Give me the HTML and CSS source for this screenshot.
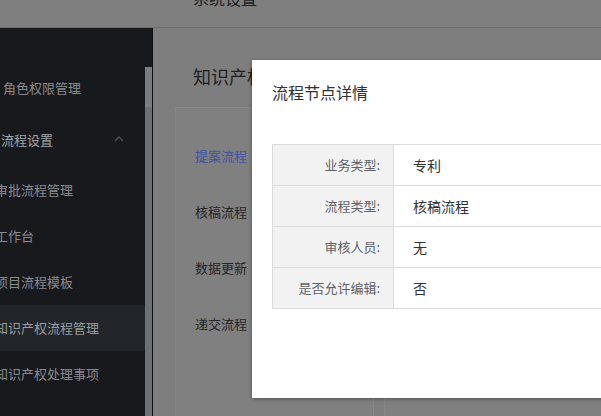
FILE: index.html
```html
<!DOCTYPE html>
<html lang="zh-CN">
<head>
<meta charset="utf-8">
<title>流程节点详情</title>
<link rel="stylesheet" href="styles.css">
</head>
<body>
<div class="app">
  <header class="topbar"><span class="crumb">系统设置</span></header>
  <div class="main">
    <aside class="sidebar">
      <nav class="menu">
        <div class="item lvl-a">角色权限管理</div>
        <div class="group"><span>流程设置</span>
          <svg class="chev" width="10" height="7" viewBox="0 0 10 7"><polyline points="1,6 5,2 9,6" fill="none" stroke="#505156" stroke-width="1.3"/></svg>
        </div>
        <div class="item sub">审批流程管理</div>
        <div class="item sub">工作台</div>
        <div class="item sub">项目流程模板</div>
        <div class="item sub active">知识产权流程管理</div>
        <div class="item sub">知识产权处理事项</div>
      </nav>
      <div class="scrollbar"><div class="track"></div><div class="thumb"></div></div>
    </aside>
    <section class="content">
      <h1 class="page-title">知识产权流程管理</h1>
      <div class="cards">
        <div class="card steps">
          <div class="step current">提案流程</div>
          <div class="step">核稿流程</div>
          <div class="step">数据更新</div>
          <div class="step">递交流程</div>
        </div>
        <div class="card detail"></div>
      </div>
    </section>
  </div>

  <div class="dialog">
    <div class="dialog-header"><span class="dialog-title">流程节点详情</span></div>
    <div class="dialog-body">
      <table class="info">
        <colgroup><col class="col-lbl"><col></colgroup>
        <tr><td class="lbl">业务类型:</td><td class="val">专利</td></tr>
        <tr><td class="lbl">流程类型:</td><td class="val">核稿流程</td></tr>
        <tr><td class="lbl">审核人员:</td><td class="val">无</td></tr>
        <tr><td class="lbl">是否允许编辑:</td><td class="val">否</td></tr>
      </table>
    </div>
  </div>
</div>
</body>
</html>
```
FILE: styles.css
```css
* { box-sizing: border-box; }
html, body { margin: 0; padding: 0; }
body {
  width: 601px;
  height: 416px;
  overflow: hidden;
  font-family: "Noto Sans CJK SC", "Microsoft YaHei", sans-serif;
  background: #7f7f7f;
}
.app { position: relative; width: 601px; height: 416px; overflow: hidden; }

.topbar {
  height: 28px;
  background: #7f7f7f;
  border-bottom: 1px solid #6f6f6f;
  padding-left: 193px;
  overflow: hidden;
}
.crumb {
  display: block;
  margin-top: -10px;
  font-size: 16px;
  line-height: 16px;
  color: #1c1c1e;
}

.main { display: flex; height: 388px; }

.sidebar {
  width: 153px;
  flex: none;
  display: flex;
  background: #18191d;
  border-right: 1px solid #0e0e10;
  overflow: hidden;
}
.menu {
  width: 165px;
  flex: none;
  margin-left: -20px;
  padding-top: 37px;
  font-size: 13px;
  color: #8a8b8e;
}
.item { height: 46px; line-height: 46px; white-space: nowrap; }
.lvl-a { padding-left: 23px; }
.sub { padding-left: 15px; }
.sub.active { background: #22262a; color: #9a9b9e; }
.group {
  height: 56px;
  display: flex;
  align-items: center;
  justify-content: space-between;
  padding-left: 21px;
  padding-right: 21px;
  color: #a4a5a8;
}
.chev { display: block; margin-top: -2px; }

.scrollbar { width: 7px; flex: none; padding-top: 39px; display: flex; flex-direction: column; }
.track { height: 40px; background: #7b7d80; }
.thumb { flex: 1; background: #6b7175; }

.content {
  flex: 1;
  background: #7e7e7e;
  padding: 36px 0 0 22px;
  overflow: hidden;
}
.page-title {
  margin: 0 0 19px 18px;
  font-size: 18px;
  line-height: 24px;
  font-weight: normal;
  color: #1e1e1f;
  white-space: nowrap;
}
.cards { display: flex; gap: 10px; height: 340px; }
.card {
  background: #808080;
  border: 1px solid #888888;
  border-bottom: none;
}
.steps { width: 199px; flex: none; padding: 20px 19px; }
.detail { width: 300px; flex: none; }
.step { height: 56px; line-height: 56px; font-size: 13px; color: #252526; }
.step.current { color: #3d55a0; }

.dialog {
  position: absolute;
  left: 252px;
  top: 60px;
  width: 480px;
  height: 338px;
  background: #ffffff;
  box-shadow: 0 1px 4px rgba(0, 0, 0, 0.35);
}
.dialog-header { padding: 20px 20px 10px; }
.dialog-title { display: block; font-size: 16px; line-height: 24px; color: #303133; }
.dialog-body { padding: 30px 20px; }
.info { border-collapse: collapse; width: 100%; table-layout: fixed; }
.col-lbl { width: 121px; }
.info td { border: 1px solid #dcdcdc; padding: 0; line-height: 40px; height: 40px; }
.lbl {
  padding-right: 13px !important;
  text-align: right;
  background: #f2f2f2;
  font-size: 13px;
  color: #606266;
  white-space: nowrap;
}
.val { padding-left: 19px !important; font-size: 14px; color: #303133; }
```
